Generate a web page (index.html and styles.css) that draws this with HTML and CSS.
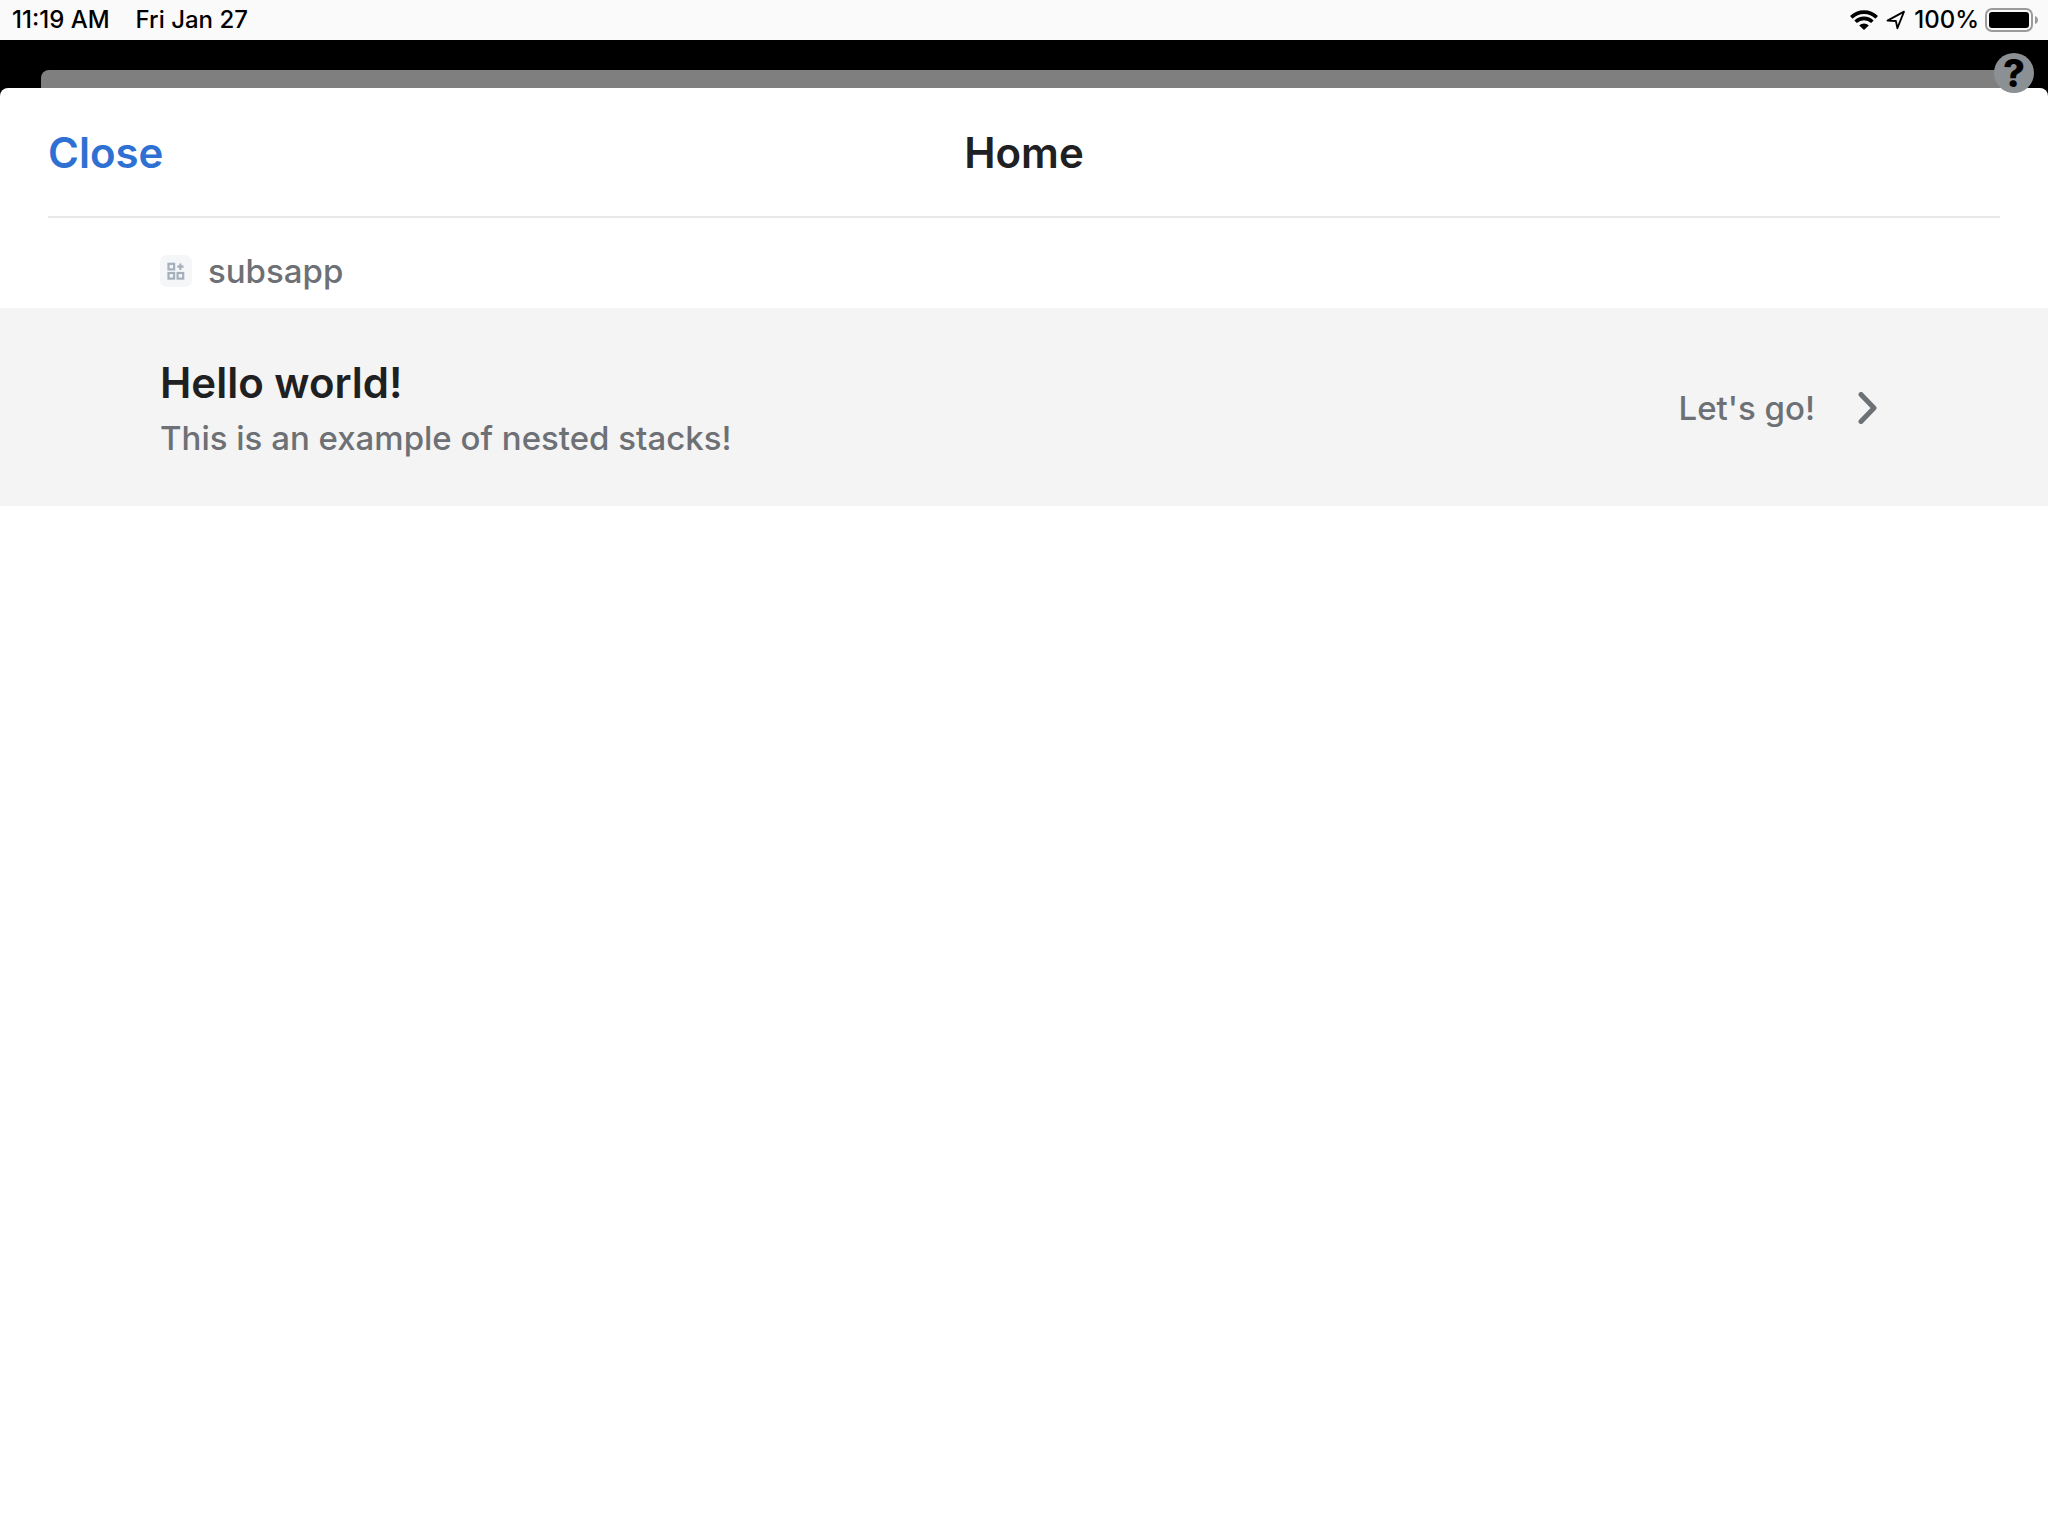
FILE: index.html
```html
<!DOCTYPE html>
<html lang="en">
<head>
<meta charset="utf-8">
<meta name="viewport" content="width=device-width, initial-scale=1">
<title>Home</title>
<link rel="stylesheet" href="styles.css">
</head>
<body>
<div class="status-bar">
  <div class="status-group status-left"><time>11:19 AM</time><span>Fri Jan 27</span></div>
  <div class="status-group status-right">
    <svg class="wifi" viewBox="0 0 28 20" aria-hidden="true">
      <g fill="none" stroke="#000" stroke-width="3.6">
        <path d="M1.3 7.4a18 18 0 0 1 25.4 0"/>
        <path d="M5.6 11.8a11.9 11.9 0 0 1 16.8 0"/>
      </g>
      <path d="M9.2 15.6a6.8 6.8 0 0 1 9.6 0L14 20z"/>
    </svg>
    <svg class="location" viewBox="0 0 20 20" aria-hidden="true">
      <path d="M1.5 10.6 18 1.6l-6.6 16.6-1.5-7.2z" fill="none" stroke="#000" stroke-width="1.8" stroke-linejoin="round"/>
    </svg>
    <span class="charge">100%<svg class="battery" viewBox="0 0 54 24" aria-hidden="true">
      <rect x="1" y="1" width="46" height="22" rx="6" fill="none" stroke="#9b9b9b" stroke-width="2"/>
      <rect x="4" y="4" width="40" height="16" rx="3"/>
      <path d="M50 8q3 1 3 4t-3 4z" fill="#9b9b9b"/>
    </svg></span>
  </div>
</div>
<div class="backdrop">
  <div class="card-behind"></div>
  <main class="sheet">
    <header class="sheet-header">
      <button class="close" type="button">Close</button>
      <h1 class="title">Home</h1>
    </header>
    <section>
      <h2 class="app">
        <svg class="app-icon" viewBox="0 0 32 32" aria-hidden="true">
          <rect width="32" height="32" rx="7" fill="#f4f6f8"/>
          <g fill="none" stroke="#a5b0bd" stroke-width="2.2">
            <rect x="8.5" y="8.8" width="5.6" height="5.6"/>
            <rect x="8.500" y="18" width="5.6" height="5.6"/>
            <rect x="17.600" y="18" width="5.6" height="5.6"/>
            <path d="M20.400 8.500v6.400M17.200 11.700h6.400"/>
          </g>
        </svg>
        <span>subsapp</span>
      </h2>
      <button class="row" type="button">
        <span class="row-text">
          <span class="row-title">Hello world!</span>
          <span class="row-subtitle">This is an example of nested stacks!</span>
        </span>
        <span class="row-action">Let's go!</span>
        <svg class="chevron" viewBox="0 0 20 32" aria-hidden="true">
          <path d="M3 2.500 16 16 3 29.500" fill="none" stroke="#6d7075" stroke-width="5" stroke-linecap="round" stroke-linejoin="round"/>
        </svg>
      </button>
    </section>
  </main>
  <button class="help" type="button" aria-label="Help">?</button>
</div>
</body>
</html>
```
FILE: styles.css
```css
* {
  box-sizing: border-box;
}

body {
  margin: 0;
  min-height: 100vh;
  display: flex;
  flex-direction: column;
  background: #000;
  color: #1f2021;
  font-family: Inter, "Liberation Sans", sans-serif;
}

button {
  border: 0;
  padding: 0;
  background: none;
  font-family: inherit;
  text-align: left;
}

.status-bar {
  display: flex;
  justify-content: space-between;
  align-items: center;
  height: 40px;
  padding: 0 9px 0 12px;
  background: #fafafa;
  color: #000;
  font-size: 24px;
  font-weight: 500;
  line-height: 40px;
}

.status-group,
.charge {
  display: flex;
  align-items: center;
}

.status-left {
  gap: 26px;
}

.status-right {
  gap: 8px;
}

.charge {
  gap: 6px;
}

.wifi {
  width: 28px;
  height: 20px;
}

.location {
  width: 20px;
  height: 20px;
}

.battery {
  width: 54px;
  height: 24px;
}

.backdrop {
  position: relative;
  flex: 1;
  display: flex;
  flex-direction: column;
  padding-top: 30px;
}

.card-behind {
  height: 26px;
  margin: 0 41px -8px;
  border-radius: 8px 8px 0 0;
  background: #7f7f7f;
}

.sheet {
  flex: 1;
  position: relative;
  border-radius: 8px 8px 0 0;
  background: #fff;
}

.sheet-header {
  display: grid;
  grid-template-columns: 1fr auto 1fr;
  align-items: center;
  height: 130px;
  margin: 0 48px;
  border-bottom: 2px solid #e8e8e8;
}

.close {
  justify-self: start;
  color: #2e71d3;
  font-size: 42px;
  font-weight: 600;
}

.title {
  margin: 0;
  font-size: 42px;
  font-weight: 600;
}

.app {
  display: flex;
  align-items: center;
  gap: 16px;
  height: 90px;
  margin: 0;
  padding: 16px 160px 0;
  color: #6d7075;
  font-size: 33px;
  font-weight: 500;
}

.app-icon {
  width: 32px;
  height: 32px;
}

.row {
  display: flex;
  align-items: center;
  width: 100%;
  height: 198px;
  padding: 2px 170px 0 160px;
  background: #f4f4f4;
  color: #6d7075;
  font-size: 33px;
  font-weight: 500;
}

.row-text {
  flex: 1;
  display: flex;
  flex-direction: column;
}

.row-title {
  color: #1f2021;
  font-size: 42px;
  font-weight: 600;
  line-height: 60px;
}

.row-subtitle {
  line-height: 50px;
}

.chevron {
  width: 20px;
  height: 32px;
  margin-left: 43px;
}

.help {
  position: absolute;
  top: 13px;
  right: 14px;
  width: 40px;
  height: 40px;
  border-radius: 50%;
  background: #8b9094;
  color: #000;
  font-size: 38px;
  font-weight: 800;
  line-height: 40px;
  text-align: center;
}
```
